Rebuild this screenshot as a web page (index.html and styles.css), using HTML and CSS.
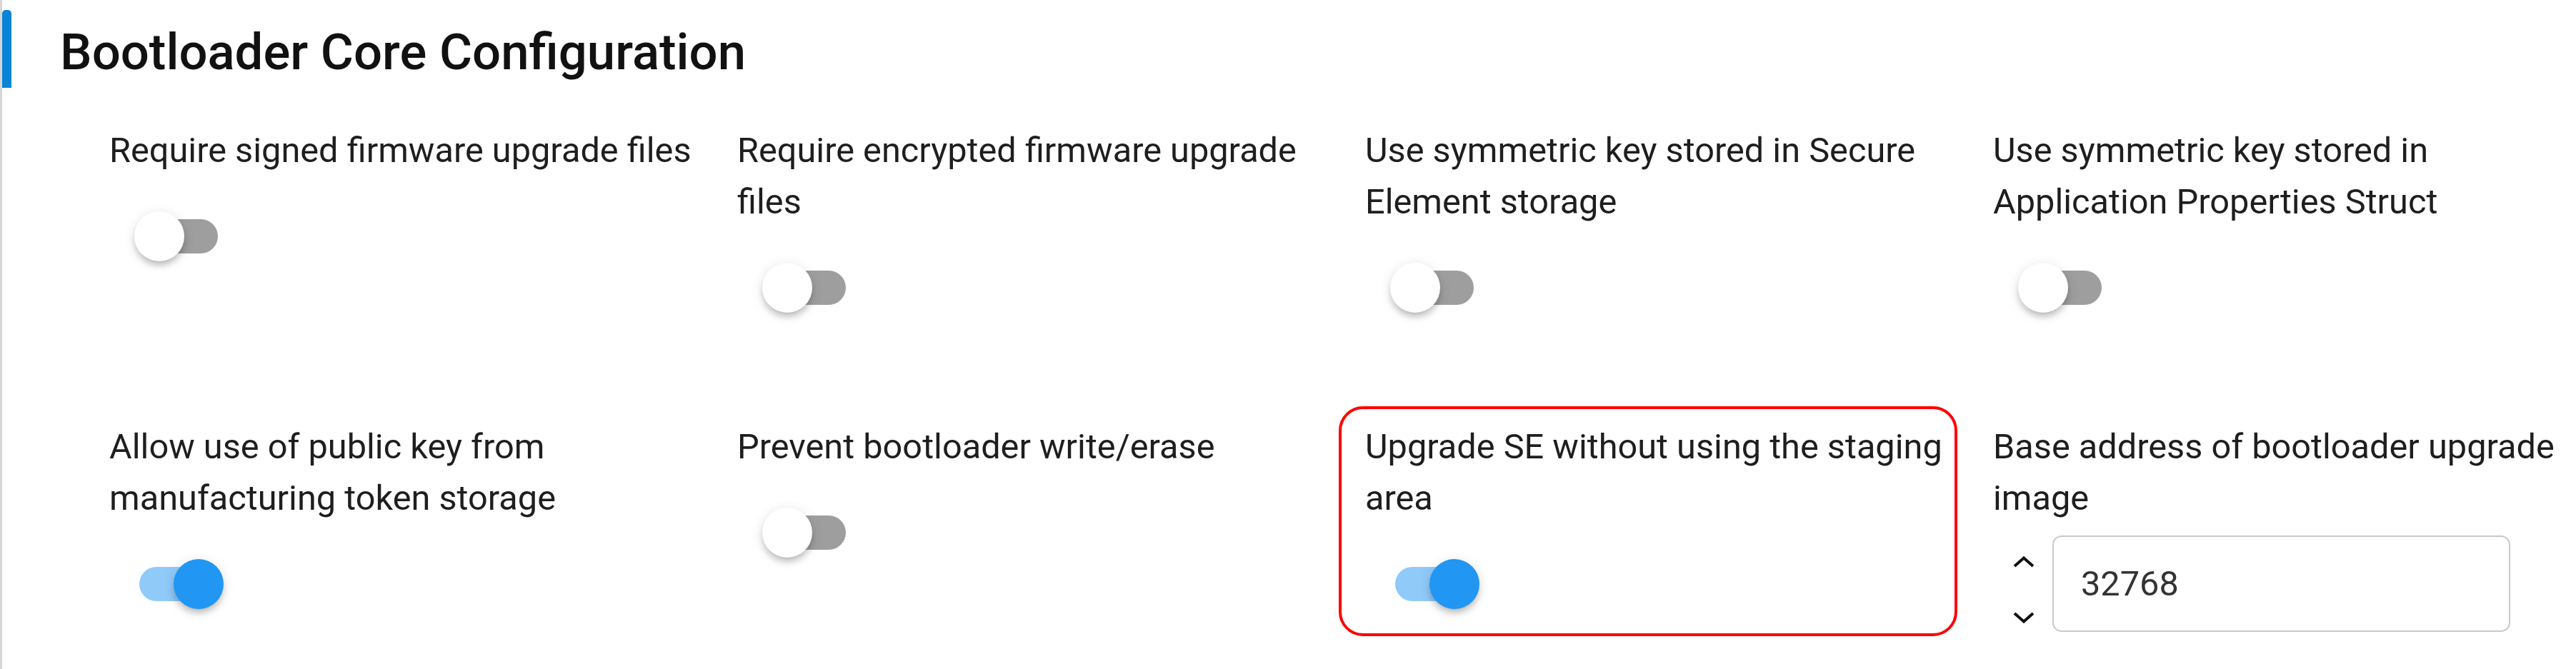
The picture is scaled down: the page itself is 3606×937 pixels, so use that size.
FILE: index.html
```html
<!DOCTYPE html>
<html lang="en">
<head>
<meta charset="utf-8">
<title>Bootloader Core Configuration</title>
<link rel="stylesheet" href="styles.css">
</head>
<body>
<div class="page">
  <header class="section-header">
    <span class="accent"></span>
    <h1 class="title">Bootloader Core Configuration</h1>
  </header>
  <div class="grid">
    <div class="cell">
      <div class="label">Require signed firmware upgrade files</div>
      <div class="switch"><span class="track"></span><span class="thumb"></span></div>
    </div>
    <div class="cell">
      <div class="label">Require encrypted firmware upgrade files</div>
      <div class="switch"><span class="track"></span><span class="thumb"></span></div>
    </div>
    <div class="cell">
      <div class="label">Use symmetric key stored in Secure Element storage</div>
      <div class="switch"><span class="track"></span><span class="thumb"></span></div>
    </div>
    <div class="cell">
      <div class="label">Use symmetric key stored in Application Properties Struct</div>
      <div class="switch"><span class="track"></span><span class="thumb"></span></div>
    </div>
    <div class="cell">
      <div class="label">Allow use of public key from manufacturing token storage</div>
      <div class="switch on"><span class="track"></span><span class="thumb"></span></div>
    </div>
    <div class="cell">
      <div class="label">Prevent bootloader write/erase</div>
      <div class="switch"><span class="track"></span><span class="thumb"></span></div>
    </div>
    <div class="cell highlighted">
      <div class="label">Upgrade SE without using the staging area</div>
      <div class="switch on"><span class="track"></span><span class="thumb"></span></div>
    </div>
    <div class="cell">
      <div class="label">Base address of bootloader upgrade image</div>
      <div class="number-field">
        <div class="spin">
          <svg class="chev" width="30" height="16" viewBox="0 0 30 16"><polyline points="2,14 15,2.5 28,14" fill="none" stroke="#111" stroke-width="4"/></svg>
          <svg class="chev" width="30" height="16" viewBox="0 0 30 16"><polyline points="2,2 15,13.5 28,2" fill="none" stroke="#111" stroke-width="4"/></svg>
        </div>
        <input class="number-input" type="text" value="32768">
      </div>
    </div>
  </div>
</div>
</body>
</html>
```
FILE: styles.css
```css
html, body {
  margin: 0;
  background: #ffffff;
}

body {
  font-family: Roboto, "Liberation Sans", sans-serif;
}

.page {
  min-height: 100vh;
  box-sizing: border-box;
  border-left: 3px solid #d6d6d6;
  padding-top: 14px;
}

.section-header {
  display: flex;
  align-items: flex-start;
  height: 109px;
}

.accent {
  flex: none;
  width: 13px;
  height: 109px;
  background: #0b84d8;
  border-radius: 5px 5px 0 0;
}

.title {
  margin: 17px 0 0 68px;
  font-size: 70.7px;
  font-weight: 500;
  line-height: 84px;
  color: #111111;
}

.grid {
  display: grid;
  grid-template-columns: repeat(4, 879px);
  row-gap: 152px;
  margin: 52px 0 0 150px;
}

.cell {
  position: relative;
}

.label {
  max-width: 850px;
  font-size: 48.7px;
  line-height: 72px;
  color: #1e1e1e;
}

.switch {
  position: relative;
  width: 125px;
  height: 70px;
  margin: 49px 0 0 35px;
}

.track {
  position: absolute;
  left: 7px;
  top: 11px;
  width: 110px;
  height: 48px;
  border-radius: 24px;
  background: #9e9e9e;
}

.thumb {
  position: absolute;
  left: 0;
  top: 0;
  width: 70px;
  height: 70px;
  border-radius: 50%;
  background: #ffffff;
  box-shadow: 0 7px 4px -7px rgba(0, 0, 0, 0.2), 0 7px 7px rgba(0, 0, 0, 0.14), 0 3px 17px rgba(0, 0, 0, 0.12);
}

.switch.on .track {
  background: #90caf9;
}

.switch.on .thumb {
  left: 55px;
  background: #2196f3;
}

.highlighted::after {
  content: "";
  position: absolute;
  left: -37px;
  top: -21px;
  width: 866px;
  height: 322px;
  box-sizing: border-box;
  border: 4px solid #ff0000;
  border-radius: 34px;
  pointer-events: none;
}

.number-field {
  display: flex;
  margin-top: 16px;
  gap: 5px;
}

.spin {
  width: 70px;
  margin-left: 8px;
  box-sizing: border-box;
  padding-top: 29px;
  display: flex;
  flex-direction: column;
  align-items: center;
  gap: 62px;
}

.chev {
  display: block;
}

.number-input {
  width: 641px;
  height: 135px;
  box-sizing: border-box;
  border: 2px solid #c9c9c9;
  border-radius: 13px;
  padding: 0 0 0 38px;
  font-family: Roboto, "Liberation Sans", sans-serif;
  font-size: 48.7px;
  color: #333333;
  background: #ffffff;
  outline: none;
}
```
